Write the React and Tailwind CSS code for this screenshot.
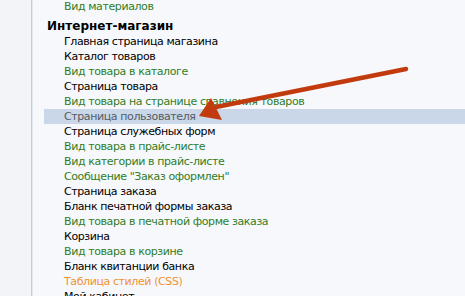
import React from "react";

const items = [
  { t: "Главная страница магазина", c: "black" },
  { t: "Каталог товаров", c: "black" },
  { t: "Вид товара в каталоге", c: "green" },
  { t: "Страница товара", c: "black" },
  { t: "Вид товара на странице сравнения товаров", c: "green" },
  { t: "Страница пользователя", c: "active" },
  { t: "Страница служебных форм", c: "black" },
  { t: "Вид товара в прайс-листе", c: "green" },
  { t: "Вид категории в прайс-листе", c: "green" },
  { t: 'Сообщение "Заказ оформлен"', c: "green" },
  { t: "Страница заказа", c: "black" },
  { t: "Бланк печатной формы заказа", c: "black" },
  { t: "Вид товара в печатной форме заказа", c: "green" },
  { t: "Корзина", c: "black" },
  { t: "Вид товара в корзине", c: "green" },
  { t: "Бланк квитанции банка", c: "black" },
  { t: "Таблица стилей (CSS)", c: "orange" },
  { t: "Мой кабинет", c: "black" },
];

const colorClass = {
  black: "text-black",
  green: "text-[#2f7d1f]",
  orange: "text-[#f0922e]",
  active: "text-[#555b63] bg-[#c9d7e9]",
};

const App = () => {
  return (
    <div className="flex w-[465px] h-[296px] overflow-hidden bg-[#f7f8fc] font-['DejaVu_Sans',Verdana,sans-serif]">
      <div className="w-[32px] shrink-0 bg-[#f2f4f8] border-r border-[#c3ccd9]"></div>
      <div className="w-px shrink-0 bg-[#e3e8f0]"></div>
      <div className="flex-1 pl-[11px] -mt-[1px]">
        <div className="pl-[20px] h-[15px] leading-[15px] text-[11px] tracking-[-0.4px] text-[#2f7d1f]">
          Вид материалов
        </div>
        <div className="pl-[3px] mt-[5px] h-[15px] leading-[15px] text-[12px] font-bold text-black">
          Интернет-магазин
        </div>
        {items.map((it, i) => (
          <div
            key={i}
            className={`pl-[20px] h-[15px] leading-[15px] text-[11px] tracking-[-0.4px] whitespace-nowrap ${colorClass[it.c]}`}
          >
            {it.t}
          </div>
        ))}
      </div>
      {/* red pointer arrow drawn over the list */}
      <svg
        className="absolute left-0 top-0 pointer-events-none"
        width="465"
        height="296"
      >
        <line
          x1="406"
          y1="69"
          x2="216"
          y2="107"
          stroke="#c23b0e"
          strokeWidth="4.5"
          strokeLinecap="round"
        />
        <polygon points="199,116 211,98 222,120" fill="#c23b0e" />
      </svg>
    </div>
  );
};

export default App;
